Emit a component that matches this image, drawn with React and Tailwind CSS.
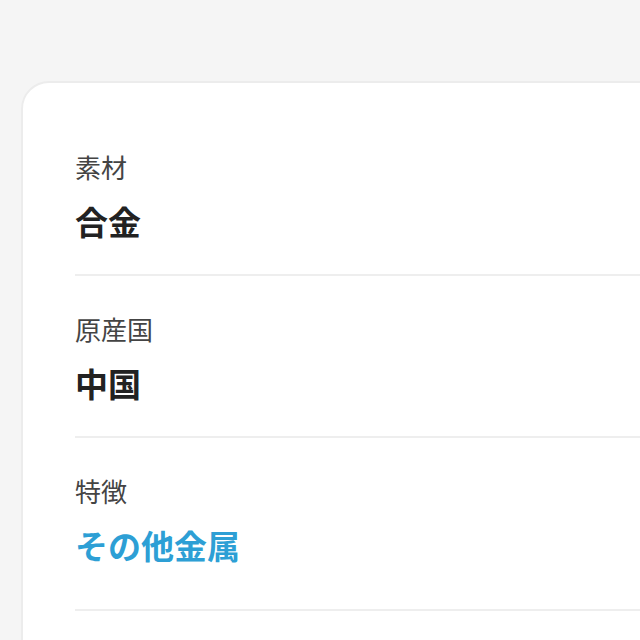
import React from "react";

const rows = [
  { label: "素材", value: "合金" },
  { label: "原産国", value: "中国" },
  { label: "特徴", value: "その他金属", link: true },
];

export default function App() {
  return (
    <div
      className="w-[640px] h-[640px] overflow-hidden bg-[#f5f5f5] pt-[81px] pl-[21px]"
      style={{ fontFamily: '"Noto Sans CJK JP", "Noto Sans", sans-serif' }}
    >
      <div className="w-[700px] min-h-[620px] bg-white rounded-[28px] border-2 border-[#ececec] px-[52px] pt-[31px]">
        {rows.map((row, i) => (
          <div
            key={row.label}
            className={`pt-[35px] border-b-2 border-[#eeeeee] ${
              i === rows.length - 1 ? "pb-[42px]" : "pb-[31px]"
            }`}
          >
            <div className="text-[26px] leading-[36px] text-[#444]">{row.label}</div>
            <div
              className={`mt-[14px] text-[33px] leading-[44px] font-bold ${
                row.link ? "text-[#2d9fd5]" : "text-[#222]"
              }`}
            >
              {row.value}
            </div>
          </div>
        ))}
      </div>
    </div>
  );
}
